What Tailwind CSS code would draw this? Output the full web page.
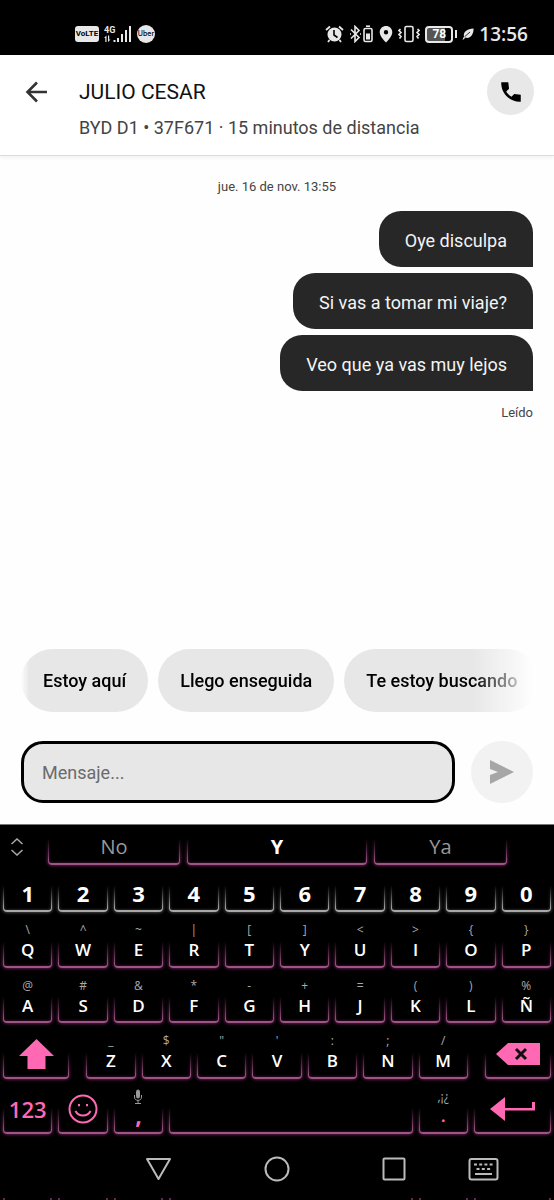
<!DOCTYPE html>
<html lang="es">
<head>
<meta charset="utf-8">
<meta name="viewport" content="width=device-width, initial-scale=1">
<title>Chat con JULIO CESAR</title>
<script src="https://cdn.jsdelivr.net/npm/@tailwindcss/browser@4"></script>
</head>
<body class="flex min-h-screen flex-col bg-[#fefefe] font-['Roboto',sans-serif] text-black">

<!-- Status bar -->
<div class="flex h-[55px] shrink-0 items-center justify-between bg-black pt-[13px] pr-[26px] pl-[75px] text-[#e8e8e8]">
  <div class="flex items-center gap-[5px]">
    <span class="flex h-4 w-6 items-center justify-center rounded-[3px] bg-[#e8e8e8] text-[8px] font-bold text-black">VoLTE</span>
    <svg class="h-[18px] w-[28px]" viewBox="0 0 28 18" fill="currentColor" role="img" aria-label="Señal 4G">
      <text x="0" y="8" font-family="Roboto, sans-serif" font-size="9" font-weight="700">4G</text>
      <path d="M0 13l2.500-2.500V17H1.300v-4zM4 10.500h1.200v4H6.500L4 17zM9.500 15h2v2h-2zM13 13h2v4h-2zM17 9h2v8h-2zM21 5h2v12h-2zM25 1h2v16h-2z"/>
    </svg>
    <span class="flex size-[18px] items-center justify-center rounded-full bg-[#e8e8e8] font-['Inter',sans-serif] text-[7px] font-medium text-black">Uber</span>
  </div>
  <div class="flex items-center gap-[5px]">
    <svg class="h-[18px] w-[19px]" viewBox="0 0 19 18" role="img" aria-label="Alarma">
      <circle cx="9.500" cy="9.500" r="7" fill="currentColor"/>
      <path d="M1 5l4-3.500M18 5l-4-3.500M4.500 15L3 17M14.500 15l1.500 2" stroke="currentColor" stroke-width="1.800" fill="none"/>
      <path d="M9 5v5l3.500 2.500" stroke="#000" stroke-width="1.600" fill="none"/>
    </svg>
    <svg class="h-[18px] w-[25px]" viewBox="0 0 25 18" fill="none" stroke="currentColor" role="img" aria-label="Bluetooth">
      <path d="M2 4.500l8 8L6 16.500v-15l4 4-8 8M1 9h1M11 9h1" stroke-width="1.600"/>
      <rect x="15" y="3.500" width="8" height="13" rx="1.500" stroke-width="1.600"/>
      <path d="M17 1.200h4" stroke-width="1.600"/><path d="M17 8.500h4v6h-4z" fill="currentColor" stroke="none"/>
    </svg>
    <svg class="h-[18px] w-[14px]" viewBox="0 0 14 18" role="img" aria-label="Ubicación"><path fill="currentColor" fill-rule="evenodd" d="M7 1C3.500 1 .7 3.700.7 7.200.7 11.500 7 17.500 7 17.500s6.300-6 6.300-10.300C13.300 3.700 10.500 1 7 1zm0 4a2.200 2.200 0 110 4.400A2.200 2.200 0 017 5z"/></svg>
    <svg class="h-[18px] w-[22px]" viewBox="0 0 22 18" fill="none" stroke="currentColor" stroke-width="1.600" role="img" aria-label="Vibración"><rect x="7" y="1.500" width="8" height="15" rx="1.500"/><path d="M2.500 4L1 5.500l2 2-2 2 2 2L1.500 13.500M19.500 4L21 5.500l-2 2 2 2-2 2 1.500 2"/></svg>
    <div class="flex items-center gap-[2px]">
      <span class="flex h-[17px] w-[28px] items-center justify-center rounded-[4px] border-2 border-[#e8e8e8] bg-linear-to-r from-[#555] from-75% to-black to-75% text-[12px] font-bold text-white">78</span>
      <span class="h-2 w-[2px] bg-[#e8e8e8]"></span>
    </div>
    <svg class="h-3 w-3" viewBox="0 0 12 12" role="img" aria-label="Ahorro"><path fill="currentColor" d="M.5 11.500L2 8.500C1 4 5 1 11.500.5 12 6 8 11.500 3.500 9.500l-2 2z"/><path d="M2.500 8.800L8 4" stroke="#000" stroke-width=".8"/></svg>
    <span class="font-['Open_Sans',sans-serif] text-[19px] leading-5 font-semibold">13:56</span>
  </div>
</div>

<!-- Contact header -->
<header class="relative flex h-[101px] shrink-0 items-start border-b border-[#dcdcdc] bg-white pt-[13px] pr-5 pl-[25px] shadow-[0_2px_4px_rgba(0,0,0,0.05)]">
  <button type="button" aria-label="Volver" class="mt-3 shrink-0">
    <svg class="size-6" viewBox="0 0 24 24" fill="none" stroke="#333" stroke-width="2.600"><path d="M22 12H3M12 2.500L2.500 12l9.500 9.500"/></svg>
  </button>
  <div class="ml-[30px] flex-1 pt-[10px] whitespace-nowrap">
    <h1 class="text-[21px] leading-7 text-[#111]">JULIO CESAR</h1>
    <p class="mt-2 text-[18px] leading-7 text-[#444]">BYD D1 • 37F671 · 15 minutos de distancia</p>
  </div>
  <button type="button" aria-label="Llamar" class="flex size-[47px] shrink-0 items-center justify-center rounded-full bg-[#e8e8e8]">
    <svg class="size-[26px]" viewBox="0 0 24 24"><path d="M3 3h6.500l.7 6-2.600 2.600c1.100 1.900 2.900 3.700 4.800 4.800l2.600-2.600 6 .7V21h-1C10.600 21 3 13.400 3 4z"/></svg>
  </button>
</header>

<!-- Conversation -->
<main class="flex flex-1 flex-col items-end px-[21px] pt-5 text-[#444]">
  <time class="self-center text-[13px] leading-[22px]">jue. 16 de nov. 13:55</time>
  <ul class="mt-[13px] flex flex-col items-end gap-[6px] text-[18px] text-[#f4f4f4]">
    <li class="flex h-14 items-center rounded-[22px] rounded-br-none bg-[#272727] px-[26px] pt-[2px]">Oye disculpa</li>
    <li class="flex h-14 items-center rounded-[22px] rounded-br-none bg-[#272727] px-[26px] pt-[2px]">Si vas a tomar mi viaje?</li>
    <li class="flex h-14 items-center rounded-[22px] rounded-br-none bg-[#272727] px-[26px] pt-[2px]">Veo que ya vas muy lejos</li>
  </ul>
  <p class="mt-[11px] text-[13px] leading-[22px]">Leído</p>
</main>

<!-- Quick replies -->
<div class="mx-[21px] flex shrink-0 gap-[10px] overflow-hidden text-[18px] font-medium whitespace-nowrap [mask-image:linear-gradient(to_right,transparent,black_8px,black_calc(100%_-_60px),transparent)]">
  <button type="button" class="h-[63px] shrink-0 rounded-full bg-[#e7e7e7] px-[22px]">Estoy aquí</button>
  <button type="button" class="h-[63px] shrink-0 rounded-full bg-[#e7e7e7] px-[22px]">Llego enseguida</button>
  <button type="button" class="h-[63px] shrink-0 rounded-full bg-[#e7e7e7] px-[22px]">Te estoy buscando</button>
</div>

<!-- Composer -->
<form class="mx-[21px] mt-[29px] mb-[21px] flex shrink-0 gap-4" onsubmit="return false">
  <input type="text" aria-label="Mensaje" placeholder="Mensaje..." class="h-[62px] min-w-0 flex-1 rounded-[22px] border-[3px] border-black bg-[#e7e7e7] px-[18px] text-[18px] outline-none placeholder:text-[#6b6b6b]">
  <button type="submit" aria-label="Enviar" class="flex size-[62px] shrink-0 items-center justify-center rounded-full bg-[#f2f2f2]">
    <svg class="size-6" viewBox="0 0 24 24" fill="#a6a6a6"><path d="M0 0l24 12L0 24v-9l8-3-8-3z"/></svg>
  </button>
</form>

<!-- Keyboard -->
<section aria-label="Teclado" class="shrink-0 border-t border-[#777] bg-black font-['Open_Sans',sans-serif] text-white">
  <div id="suggestions" class="flex h-10 items-stretch gap-[7px] pr-[47px] pl-[9px]">
    <button type="button" aria-label="Expandir" class="mr-[16px] w-4 shrink-0 pt-1">
      <svg class="mx-auto h-[18px] w-3" viewBox="0 0 12 18" fill="none" stroke="#aaa" stroke-width="1.500"><path d="M.5 6L6 1l5.500 5M.5 12L6 17l5.500-5"/></svg>
    </button>
  </div>
  <div id="numbers" class="grid h-[47px] grid-cols-10"></div>
  <div id="letters" class="grid h-[222px] grid-cols-20 grid-rows-4"></div>
</section>

<!-- System navigation -->
<nav class="h-[66px] shrink-0 overflow-hidden bg-black">
  <div class="flex h-16 items-center pt-[5px] pl-[145px]">
    <button type="button" aria-label="Atrás" class="mr-[92px]"><svg class="h-6 w-[27px]" viewBox="0 0 27 24" fill="none" stroke="#bbb" stroke-width="2" stroke-linejoin="round"><path d="M2 2h23L13.500 22z"/></svg></button>
    <button type="button" aria-label="Inicio" class="mr-[92px]"><svg class="size-[26px]" viewBox="0 0 26 26" fill="none" stroke="#bbb" stroke-width="2"><circle cx="13" cy="13" r="11.500"/></svg></button>
    <button type="button" aria-label="Recientes" class="mr-[62px]"><svg class="size-6" viewBox="0 0 24 24" fill="none" stroke="#bbb" stroke-width="2"><rect x="1.500" y="1.500" width="21" height="21" rx="1"/></svg></button>
    <button type="button" aria-label="Cambiar teclado"><svg class="h-6 w-[31px]" viewBox="0 0 31 24" fill="none" stroke="#bbb" stroke-width="2"><rect x="1.500" y="2" width="28" height="20.500" rx="2"/><path d="M6 7.500h19" stroke-dasharray="3 2.200"/><path d="M8.500 12h14" stroke-dasharray="3 2.300"/><path d="M7 17h17"/></svg></button>
  </div>
  <div id="edge" class="grid h-[2px] grid-cols-20"></div>
</nav>

<script>
const glow = (tone) => `<span class="pointer-events-none absolute -inset-x-1 -bottom-1 h-9 p-1 [mask-image:linear-gradient(to_bottom,transparent_15%,black_80%)]"><span class="block h-full rounded-b-[4px] border-x-[1px] border-b-[2px] ${tone}"></span></span>`;
const pink = glow("border-[#9c5584] shadow-[0_0_3px_1px_#5e1c4a,inset_0_0_3px_#5e1c4a]");
const white = glow("border-[#a8a8a8] shadow-[0_0_3px_1px_#444,inset_0_0_3px_#444]");
const add = (id, html) => document.getElementById(id).insertAdjacentHTML("beforeend", html);

[["No", "flex-[132] text-[#999]"], ["Y", "flex-[180] font-bold"], ["Ya", "flex-[133] text-[#999]"]].forEach(([word, look]) =>
  add("suggestions", `<button type="button" class="relative min-w-0 pt-[10px] pb-[6px] text-[20px] leading-6 ${look}">${pink}${word}</button>`));

[..."1234567890"].forEach(d =>
  add("numbers", `<button type="button" class="relative mx-[3px] pt-2 text-[22px] leading-8 font-bold">${white}${d}</button>`));

const letter = (main, hint) => `<button type="button" class="relative col-span-2 mx-[3px] flex flex-col items-center pt-2">${pink}<span class="h-5 text-[12px] leading-5 text-[#aaa]">${hint}</span><span class="text-[17px] leading-5 font-semibold">${main}</span></button>`;
const row = (keys, hints) => [...keys].map((k, i) => letter(k, hints[i])).join("");

add("letters", row("QWERTYUIOP", ["\\", "^", "~", "|", "[", "]", "&lt;", "&gt;", "{", "}"]));
add("letters", row("ASDFGHJKLÑ", ["@", "#", "&amp;", "*", "-", "+", "=", "(", ")", "%"]));
add("letters", `<button type="button" aria-label="Mayúsculas" class="relative col-span-3 mr-[14px] ml-[3px] flex items-center justify-center pt-[6px]">${pink}<svg class="h-[30px] w-[35px]" viewBox="0 0 35 30" fill="#ff69b4"><path d="M17.500 0L35 17h-8.500v13h-18V17H0z"/></svg></button>`);
add("letters", row("ZXCVBNM", ["_", "$", "\"", "'", ":", ";", "/"]));
add("letters", `<button type="button" aria-label="Borrar" class="relative col-span-3 mr-[3px] ml-[14px] flex items-center justify-center pt-[6px]">${pink}<svg class="h-[22px] w-[44px]" viewBox="0 0 44 22"><path fill="#ff69b4" d="M0 11L12 0h32v22H12z"/><path d="M20 6l10 10M30 6L20 16" stroke="#111" stroke-width="3"/></svg></button>`);
add("letters", `
<button type="button" class="relative col-span-2 mx-[3px] pt-[6px] text-[22px] font-semibold text-[#ff69b4]">${pink}123</button>
<button type="button" aria-label="Emoji" class="relative col-span-2 mx-[3px] flex items-center justify-center pt-[6px]">${pink}<svg class="size-[30px]" viewBox="0 0 30 30" fill="none" stroke="#ff69b4" stroke-width="2"><circle cx="15" cy="15" r="13.500"/><path d="M7.500 17c3 6 12 6 15 0"/><path d="M11 10v2.200M19 10v2.200"/></svg></button>
<button type="button" class="relative col-span-2 mx-[3px] flex flex-col items-center pt-[10px]">${pink}<svg class="h-4 w-2" viewBox="0 0 8 16" fill="none" stroke="#999"><rect x="2.500" y="1" width="3" height="8" rx="1.500" fill="#999"/><path d="M.5 6v2c0 4.500 7 4.500 7 0V6M4 11v3M1 14.500h6"/></svg><span class="text-[23px] leading-5 font-bold text-[#ff69b4]">,</span></button>
<button type="button" aria-label="Espacio" class="relative col-span-9 mx-[3px]">${pink}</button>
<button type="button" class="relative col-span-2 mx-[3px] flex flex-col items-center pt-[10px]">${pink}<span class="h-4 text-[12px] leading-4 text-[#aaa]">,¡¿</span><span class="text-[18px] leading-5 font-semibold text-[#ff69b4]">.</span></button>
<button type="button" aria-label="Intro" class="relative col-span-3 mx-[3px] flex items-center justify-center pt-[6px]">${pink}<svg class="h-6 w-[45px]" viewBox="0 0 45 24"><path fill="#ff69b4" d="M0 12L15 0v11h27V5h3v8.500H15V24z"/></svg></button>`);

["col-span-2", "col-span-2", "col-span-2", "col-span-9", "col-span-2", "col-span-3"].forEach(span =>
  add("edge", `<span class="mx-[3px] border-x-2 border-[#6b2656] ${span}"></span>`));
</script>
</body>
</html>
